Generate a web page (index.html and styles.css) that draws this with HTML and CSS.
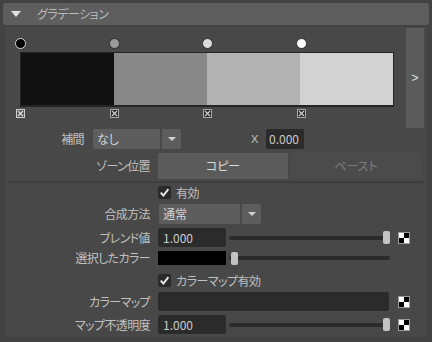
FILE: index.html
```html
<!DOCTYPE html>
<html lang="ja">
<head>
<meta charset="utf-8">
<link rel="stylesheet" href="styles.css">
</head>
<body>
<div class="header">
  <span class="tri"></span>
  <span class="title">グラデーション</span>
</div>
<div class="panel">
  <div class="top">
    <div class="editor">
      <div class="grad">
        <div class="dots">
          <span class="dot d1" style="left:0%"></span>
          <span class="dot d2" style="left:25%"></span>
          <span class="dot d3" style="left:50%"></span>
          <span class="dot d4" style="left:75%"></span>
        </div>
        <div class="bar">
          <span class="seg" style="background:#111111"></span>
          <span class="seg" style="background:#888888"></span>
          <span class="seg" style="background:#b3b3b3"></span>
          <span class="seg" style="background:#d2d2d2"></span>
        </div>
        <div class="marks">
          <svg class="mark sel" style="left:0%" width="9" height="9" viewBox="0 0 9 9"><rect x="0.5" y="0.5" width="8" height="8" fill="#555" stroke="#cfcfcf"/><path d="M2 2L7 7M7 2L2 7" stroke="#e0e0e0" stroke-width="1.2"/></svg>
          <svg class="mark" style="left:25%" width="9" height="9" viewBox="0 0 9 9"><rect x="0.5" y="0.5" width="8" height="8" fill="#2c2c2c" stroke="#a8a8a8"/><path d="M2 2L7 7M7 2L2 7" stroke="#d0d0d0" stroke-width="1.2"/></svg>
          <svg class="mark" style="left:50%" width="9" height="9" viewBox="0 0 9 9"><rect x="0.5" y="0.5" width="8" height="8" fill="#2c2c2c" stroke="#a8a8a8"/><path d="M2 2L7 7M7 2L2 7" stroke="#d0d0d0" stroke-width="1.2"/></svg>
          <svg class="mark" style="left:75%" width="9" height="9" viewBox="0 0 9 9"><rect x="0.5" y="0.5" width="8" height="8" fill="#2c2c2c" stroke="#a8a8a8"/><path d="M2 2L7 7M7 2L2 7" stroke="#d0d0d0" stroke-width="1.2"/></svg>
        </div>
      </div>
      <div class="more">&gt;</div>
    </div>
    <div class="row interp">
      <span class="lbl short">補間</span>
      <span class="select w67">なし</span>
      <span class="arrow"><span class="caret"></span></span>
      <span class="xlbl">X</span>
      <span class="field w38">0.000</span>
    </div>
    <div class="row zone">
      <span class="lbl mid">ゾーン位置</span>
      <span class="btn copy">コピー</span>
      <span class="btn paste">ペースト</span>
    </div>
  </div>
  <div class="lower">
    <div class="row chk r1">
      <span class="lbl"></span>
      <span class="cbox"><svg width="13" height="13" viewBox="0 0 13 13"><path d="M2.8 6.6L5.4 9.6L10.4 3.2" fill="none" stroke="#eeeeee" stroke-width="1.9"/></svg></span>
      <span class="ctext">有効</span>
    </div>
    <div class="row r2">
      <span class="lbl">合成方法</span>
      <span class="select w81">通常</span>
      <span class="arrow"><span class="caret"></span></span>
    </div>
    <div class="row r3">
      <span class="lbl">ブレンド値</span>
      <span class="field w68">1.000</span>
      <span class="slider"><span class="handle end"></span></span>
      <svg class="checker" width="12" height="12" viewBox="0 0 12 12"><rect x="0.5" y="0.5" width="11" height="11" fill="#fff" stroke="#9a9a9a"/><rect x="6" y="1" width="5" height="5" fill="#000"/><rect x="1" y="6" width="5" height="5" fill="#000"/></svg>
    </div>
    <div class="row r4">
      <span class="lbl">選択したカラー</span>
      <span class="swatch"></span>
      <span class="slider"><span class="handle start"></span></span>
    </div>
    <div class="row chk r5">
      <span class="lbl"></span>
      <span class="cbox"><svg width="13" height="13" viewBox="0 0 13 13"><path d="M2.8 6.6L5.4 9.6L10.4 3.2" fill="none" stroke="#eeeeee" stroke-width="1.9"/></svg></span>
      <span class="ctext">カラーマップ有効</span>
    </div>
    <div class="row r6">
      <span class="lbl">カラーマップ</span>
      <span class="field w231"></span>
      <svg class="checker c2" width="12" height="12" viewBox="0 0 12 12"><rect x="0.5" y="0.5" width="11" height="11" fill="#fff" stroke="#9a9a9a"/><rect x="6" y="1" width="5" height="5" fill="#000"/><rect x="1" y="6" width="5" height="5" fill="#000"/></svg>
    </div>
    <div class="row r7">
      <span class="lbl">マップ不透明度</span>
      <span class="field w68">1.000</span>
      <span class="slider"><span class="handle end"></span></span>
      <svg class="checker" width="12" height="12" viewBox="0 0 12 12"><rect x="0.5" y="0.5" width="11" height="11" fill="#fff" stroke="#9a9a9a"/><rect x="6" y="1" width="5" height="5" fill="#000"/><rect x="1" y="6" width="5" height="5" fill="#000"/></svg>
    </div>
  </div>
</div>
</body>
</html>
```

FILE: styles.css
```css
* { box-sizing: border-box; margin: 0; padding: 0; }
html, body { background: #424242; }
body {
  width: 432px;
  height: 342px;
  overflow: hidden;
  padding-top: 3px;
  font-family: "Noto Sans CJK JP", "Noto Sans", sans-serif;
  font-size: 12px;
  line-height: 16px;
  font-feature-settings: "palt";
  color: #c0c0c0;
}
.header {
  margin: 0 3px;
  height: 22px;
  background: #5e5e5e;
  border-radius: 3px;
  display: flex;
  align-items: center;
}
.tri {
  width: 0; height: 0;
  border-left: 5.5px solid transparent;
  border-right: 5.5px solid transparent;
  border-top: 6px solid #e2e2e2;
  margin-left: 8px;
}
.title { margin-left: 16px; color: #bababa; letter-spacing: -0.5px; }

.panel {
  margin: 2px 5px 0;
  height: 310px;
  background: #484848;
}
.top {
  margin: 0 3px 0 4px;
  padding-top: 1px;
  padding-bottom: 2px;
  border-bottom: 2px solid #3e3e3e;
}
.editor { display: flex; align-items: flex-start; }
.grad { width: 374px; margin-left: 11px; display: flex; flex-direction: column; }
.dots { position: relative; height: 24px; }
.dot {
  position: absolute;
  top: 10px;
  width: 11px; height: 11px;
  margin-left: -5px;
  border-radius: 50%;
  border: 1px solid #2e2e2e;
}
.d1 { background: #000; border: 1.5px solid #d8d8d8; }
.d2 { background: #9a9a9a; }
.d3 { background: #dcdcdc; }
.d4 { background: #ffffff; }
.bar {
  display: flex;
  height: 55px;
  border: 1px solid #242424;
  border-bottom-width: 2px;
}
.seg { flex: 1; }
.marks { position: relative; height: 9px; margin-top: 2px; }
.mark { position: absolute; top: 0; margin-left: -4px; }
.more {
  width: 18px;
  height: 100px;
  margin-left: 12px;
  background: #5b5b5b;
  display: flex;
  align-items: center;
  justify-content: center;
  font-family: "Liberation Sans", sans-serif;
  font-size: 12px;
  color: #e0e0e0;
}

.row { display: flex; align-items: center; }
.lbl { width: 145px; margin-right: 8px; text-align: right; flex: none; letter-spacing: -0.6px; }
.interp { height: 20px; margin-top: 1px; }
.lbl.short { width: 75px; margin-right: 9px; }
.zone { height: 26px; margin-top: 4px; }
.lbl.mid { width: 141px; margin-right: 8px; }

.select {
  height: 20px;
  background: #5d5d5d;
  border-radius: 2px 0 0 2px;
  padding-left: 4px;
  display: flex; align-items: center;
  color: #d4d4d4;
}
.w67 { width: 67px; }
.w81 { width: 81px; margin-left: 1px; }
.arrow {
  width: 19px; height: 20px;
  margin-left: 2px;
  background: #5d5d5d;
  border-radius: 0 2px 2px 0;
  display: flex; align-items: center; justify-content: center;
}
.caret {
  width: 0; height: 0;
  border-left: 4.5px solid transparent;
  border-right: 4.5px solid transparent;
  border-top: 4px solid #cfcfcf;
}
.xlbl { margin-left: 70px; width: 7px; font-family: "Liberation Sans", sans-serif; font-size: 11px; color: #c0c0c0; }
.field {
  height: 19px;
  background: #2b2b2b;
  border-radius: 2px;
  padding-left: 5px;
  display: flex; align-items: center;
  color: #cacaca;
}
.w38 { width: 38px; height: 20px; margin-left: 8px; padding-left: 3px; }
.w68 { width: 68px; }
.w231 { width: 231px; }

.btn {
  height: 26px;
  display: flex; align-items: center; justify-content: center;
}
.copy { width: 130px; background: #5b5b5b; color: #dcdcdc; }
.paste { width: 132px; margin-left: 2px; background: #4b4b4b; color: #7e7e7e; }

.lower { padding-top: 3px; }
.chk { height: 13px; }
.cbox {
  width: 13px; height: 13px;
  background: #2a2a2a;
  border-radius: 2px;
  display: flex;
}
.ctext { margin-left: 5px; letter-spacing: -0.5px; }
.r2 { height: 20px; margin-top: 5px; }
.r3 { height: 19px; margin-top: 4px; }
.r4 { height: 14px; margin-top: 4px; }
.r5 { margin-top: 9px; }
.r6 { height: 19px; margin-top: 5px; }
.r7 { height: 19px; margin-top: 4px; }

.slider {
  position: relative;
  width: 161px; height: 4px;
  margin-left: 3px;
  background: #2b2b2b;
  border-radius: 2px;
}
.handle {
  position: absolute;
  top: -4.5px;
  width: 7px; height: 13px;
  background: #c3c3c3;
  border-radius: 2px;
}
.handle.end { right: 0; }
.handle.start { left: 2px; }
.swatch { width: 68px; height: 14px; background: #000; }
.checker { margin-left: 8px; flex: none; }
.checker.c2 { margin-left: 9px; }
```
